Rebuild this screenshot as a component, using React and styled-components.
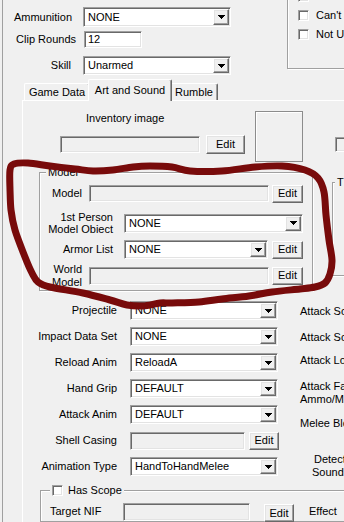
import React from 'react';
import styled, { createGlobalStyle, css } from 'styled-components';

const GlobalStyle = createGlobalStyle`
  html, body { margin: 0; padding: 0; background: #f0f0f0; }
  * { box-sizing: border-box; }
`;

/* ===== win32 bevels ===== */
const sunken = css`
  border: 1px solid;
  border-color: #a0a0a0 #fff #fff #a0a0a0;
  box-shadow: inset 1px 1px 0 #696969, inset -1px -1px 0 #e3e3e3;
`;

const raised = css`
  background: #f0f0f0;
  border: 1px solid;
  border-color: #fff #696969 #696969 #fff;
  box-shadow: inset -1px -1px 0 #a0a0a0, inset 1px 1px 0 #e3e3e3;
`;

const etched = css`
  border: 1px solid #a0a0a0;
  box-shadow: inset 1px 1px 0 #fff, 1px 1px 0 #fff;
`;

const Screen = styled.div`
  position: relative;
  width: 344px;
  height: 522px;
  overflow: hidden;
  padding-left: 2px;
  background: #f0f0f0;
  color: #000;
  font-family: "Liberation Sans", Arial, sans-serif;
  font-size: 11px;
  line-height: 13px;
`;

const Dialog = styled.div`
  height: 100%;
  border-left: 1px solid #a0a0a0;
  display: flex;
  flex-direction: column;
`;

/* ===== generic rows ===== */
const Row = styled.div`
  display: flex;
  align-items: center;
  flex-shrink: 0;
  height: ${p => p.$h || 19}px;
  margin-top: ${p => p.$mt || 0}px;
  padding-left: ${p => p.$pl || 0}px;
`;

const Label = styled.span`
  flex-shrink: 0;
  width: ${p => p.$w}px;
  margin-right: ${p => p.$gap || 0}px;
  text-align: ${p => (p.$left ? 'left' : 'right')};
  white-space: nowrap;
`;

const TextBox = styled.div`
  ${sunken}
  flex-shrink: 0;
  width: ${p => p.$w}px;
  height: ${p => p.$h || 18}px;
  background: ${p => (p.$disabled ? '#f0f0f0' : '#fff')};
  display: flex;
  align-items: center;
  padding-left: 3px;
  white-space: nowrap;
  overflow: hidden;
`;

const Combo = styled.div`
  ${sunken}
  flex-shrink: 0;
  width: ${p => p.$w}px;
  height: ${p => p.$h || 19}px;
  background: #fff;
  display: flex;
  align-items: center;
  padding: 0 1px 0 4px;
`;

const ComboText = styled.span`
  flex: 1;
  white-space: nowrap;
  overflow: hidden;
`;

const ArrowBtn = styled.span`
  ${raised}
  flex-shrink: 0;
  width: 16px;
  height: calc(100% - 2px);
  display: flex;
  align-items: center;
  justify-content: center;
`;

const EditBtn = styled.button`
  ${raised}
  flex-shrink: 0;
  width: ${p => p.$w || 31}px;
  height: ${p => p.$h || 18}px;
  margin-left: ${p => p.$ml || 0}px;
  margin-top: ${p => p.$mt || 0}px;
  padding: 0;
  font: inherit;
  color: #000;
`;

const CheckBox = styled.span`
  ${sunken}
  flex-shrink: 0;
  display: inline-block;
  width: 11px;
  height: 11px;
  background: #fff;
`;

function Arrow() {
  return (
    <svg width="7" height="4" viewBox="0 0 7 4">
      <path d="M0 0H7V1H6V2H5V3H4V4H3V3H2V2H1V1H0Z" fill="#000" />
    </svg>
  );
}

function Dropdown({ w, h, value }) {
  return (
    <Combo $w={w} $h={h}>
      <ComboText>{value}</ComboText>
      <ArrowBtn><Arrow /></ArrowBtn>
    </Combo>
  );
}

/* ===== top section ===== */
const TopSection = styled.div`
  display: flex;
  align-items: flex-start;
  height: 78px;
  flex-shrink: 0;
`;

const TopFields = styled.div`
  width: 284px;
  flex-shrink: 0;
  padding-top: 7px;
  display: flex;
  flex-direction: column;
`;

const FlagsGroup = styled.div`
  ${etched}
  flex-shrink: 0;
  width: 90px;
  height: 93px;
  margin-top: -24px;
  padding: 14px 0 0 10px;
  display: flex;
  flex-direction: column;
  gap: 8px;
`;

const Flag = styled.div`
  display: flex;
  align-items: center;
  gap: 7px;
  height: 11px;
  white-space: nowrap;
`;

/* ===== tabs ===== */
const TabStrip = styled.div`
  display: flex;
  align-items: flex-end;
  height: 22px;
  padding-left: 21px;
  flex-shrink: 0;
  position: relative;
  z-index: 1;
`;

const Tab = styled.div`
  position: relative;
  z-index: ${p => (p.$active ? 2 : 1)};
  width: ${p => p.$w}px;
  height: ${p => (p.$active ? 22 : 17)}px;
  margin: ${p => (p.$active ? '0 -2px -1px -2px' : '0')};
  padding-top: ${p => (p.$active ? 0 : 1)}px;
  background: #f0f0f0;
  border-top: 1px solid #fff;
  border-left: 1px solid #fff;
  border-right: 1px solid #696969;
  box-shadow: inset -1px 0 0 #a0a0a0;
  border-radius: 2px 2px 0 0;
  display: flex;
  align-items: center;
  justify-content: center;
  white-space: nowrap;
`;

const Panel = styled.div`
  flex: 1;
  margin-left: 19px;
  border-top: 1px solid #fff;
  border-left: 1px solid #fff;
  display: flex;
  flex-direction: column;
`;

/* ===== inventory ===== */
const InvSection = styled.div`
  display: flex;
  align-items: flex-start;
  height: 65px;
  flex-shrink: 0;
`;

const InvLeft = styled.div`
  width: 186px;
  margin-left: 37px;
  flex-shrink: 0;
  display: flex;
  flex-direction: column;
`;

const InvLabel = styled.div`
  margin: 11px 0 0 26px;
  white-space: nowrap;
`;

const ImageFrame = styled.div`
  flex-shrink: 0;
  width: 48px;
  height: 51px;
  margin: 10px 0 0 9px;
  border: 1px solid #8c8c8c;
  box-shadow: inset 1px 1px 0 #fff;
`;

const StubBox = styled(TextBox)`
  margin: 36px 0 0 32px;
`;

/* ===== group boxes ===== */
const GroupRow = styled.div`
  display: flex;
  align-items: flex-start;
  flex-shrink: 0;
  height: 127px;
`;

const Group = styled.fieldset`
  ${etched}
  flex-shrink: 0;
  min-width: 0;
  margin: ${p => p.$mt || 0}px 0 0 ${p => p.$ml || 0}px;
  padding: ${p => p.$pt || 5}px 0 ${p => p.$pb || 0}px 0;
  width: ${p => p.$w}px;
  height: ${p => (p.$h ? `${p.$h}px` : 'auto')};
`;

const Legend = styled.legend`
  margin-left: ${p => p.$ml || 6}px;
  padding: 0 2px;
  line-height: 13px;
  height: 13px;
  background: #f0f0f0;
  white-space: nowrap;
`;

const LegendInner = styled.span`
  display: inline-flex;
  align-items: center;
  gap: 5px;
  height: 13px;
`;

const TwoLine = styled.span`
  flex-shrink: 0;
  width: ${p => p.$w}px;
  margin-right: ${p => p.$gap || 0}px;
  text-align: right;
  line-height: ${p => p.$lh || 13}px;
`;

/* ===== lower form ===== */
const LowerSection = styled.div`
  display: flex;
  align-items: flex-start;
  height: 183px;
  margin-top: 8px;
  flex-shrink: 0;
`;

const LowerLeft = styled.div`
  width: 256px;
  flex-shrink: 0;
  display: flex;
  flex-direction: column;
  gap: 7px;
`;

const LowerRight = styled.div`
  margin-left: 21px;
  display: flex;
  flex-direction: column;
  white-space: nowrap;
`;

const SideLabel = styled.div`
  margin-top: ${p => p.$mt || 0}px;
  padding-left: ${p => p.$indent || 0}px;
  line-height: 13px;
`;

/* ===== hand-drawn marker ===== */
const Marker = styled.svg`
  position: absolute;
  left: 0;
  top: 0;
  pointer-events: none;
`;

const loop = [
  [10, 190], [10, 170], [14, 164], [28, 163], [50, 166], [75, 169], [93, 171],
  [113, 170], [133, 167], [150, 166], [172, 167], [190, 171], [222, 171],
  [255, 167], [282, 166], [305, 170], [318, 178], [324, 192], [326, 215],
  [329, 240], [332, 260], [330, 274], [325, 283], [315, 287], [300, 289],
  [272, 292], [249, 296], [222, 299], [199, 302], [172, 303], [160, 303],
  [143, 306], [127, 305], [110, 300], [83, 293], [50, 287], [38, 282],
  [32, 273], [25, 257], [15, 230], [11, 210], [10, 190],
];

function smoothPath(pts) {
  let d = `M${pts[0][0]} ${pts[0][1]}`;
  for (let i = 0; i < pts.length - 1; i++) {
    const p0 = pts[i - 1] || pts[i];
    const p1 = pts[i];
    const p2 = pts[i + 1];
    const p3 = pts[i + 2] || p2;
    const c1x = p1[0] + (p2[0] - p0[0]) / 6;
    const c1y = p1[1] + (p2[1] - p0[1]) / 6;
    const c2x = p2[0] - (p3[0] - p1[0]) / 6;
    const c2y = p2[1] - (p3[1] - p1[1]) / 6;
    d += ` C${c1x.toFixed(1)} ${c1y.toFixed(1)} ${c2x.toFixed(1)} ${c2y.toFixed(1)} ${p2[0]} ${p2[1]}`;
  }
  return d;
}

const lowerRows = [
  ['Projectile', 'NONE'],
  ['Impact Data Set', 'NONE'],
  ['Reload Anim', 'ReloadA'],
  ['Hand Grip', 'DEFAULT'],
  ['Attack Anim', 'DEFAULT'],
];

export default function App() {
  return (
    <Screen>
      <GlobalStyle />
      <Dialog>
        <TopSection>
          <TopFields>
            <Row $h={20}>
              <Label $w={69} $gap={11}>Ammunition</Label>
              <Dropdown w={148} h={20} value="NONE" />
            </Row>
            <Row $h={17} $mt={4}>
              <Label $w={73} $gap={8}>Clip Rounds</Label>
              <TextBox $w={58} $h={17}>12</TextBox>
            </Row>
            <Row $h={19} $mt={8}>
              <Label $w={68} $gap={12}>Skill</Label>
              <Dropdown w={148} value="Unarmed" />
            </Row>
          </TopFields>
          <FlagsGroup>
            <Flag><CheckBox />Non-Playable</Flag>
            <Flag><CheckBox />Can't Drop</Flag>
            <Flag><CheckBox />Not Used in Normal Combat</Flag>
          </FlagsGroup>
        </TopSection>

        <TabStrip>
          <Tab $w={66}>Game Data</Tab>
          <Tab $w={84} $active>Art and Sound</Tab>
          <Tab $w={48}>Rumble</Tab>
        </TabStrip>

        <Panel>
          <InvSection>
            <InvLeft>
              <InvLabel>Inventory image</InvLabel>
              <Row $h={19} $mt={10}>
                <TextBox $w={140} $h={17} $disabled />
                <EditBtn $w={39} $h={19} $ml={6}>Edit</EditBtn>
              </Row>
            </InvLeft>
            <ImageFrame />
            <StubBox $w={40} $h={15} $disabled />
          </InvSection>

          <GroupRow>
            <Group $ml={16} $w={274} $pt={5} $pb={1}>
              <Legend>Model</Legend>
              <Row $h={19}>
                <Label $w={42} $gap={7}>Model</Label>
                <TextBox $w={180} $h={17} $disabled />
                <EditBtn $ml={3}>Edit</EditBtn>
              </Row>
              <Row $h={24} $mt={8}>
                <TwoLine $w={73} $gap={11} $lh={12}>1st Person<br />Model Obiect</TwoLine>
                <Dropdown w={179} value="NONE" />
              </Row>
              <Row $h={19} $mt={5}>
                <Label $w={73} $gap={11}>Armor List</Label>
                <Dropdown w={144} value="NONE" />
                <EditBtn $ml={4}>Edit</EditBtn>
              </Row>
              <Row $h={27} $mt={3}>
                <TwoLine $w={42} $gap={7}>World<br />Model</TwoLine>
                <TextBox $w={180} $h={18} $disabled />
                <EditBtn $ml={3}>Edit</EditBtn>
              </Row>
            </Group>
            <Group $ml={19} $mt={10} $w={60} $h={100}>
              <Legend $ml={2}>T</Legend>
            </Group>
          </GroupRow>

          <LowerSection>
            <LowerLeft>
              {lowerRows.map(([label, value]) => (
                <Row key={label} $h={19}>
                  <Label $w={94} $gap={13}>{label}</Label>
                  <Dropdown w={148} value={value} />
                </Row>
              ))}
              <Row $h={19}>
                <Label $w={94} $gap={13}>Shell Casing</Label>
                <TextBox $w={115} $h={18} $disabled />
                <EditBtn $w={30} $ml={4}>Edit</EditBtn>
              </Row>
              <Row $h={19}>
                <Label $w={94} $gap={13}>Animation Type</Label>
                <Dropdown w={148} value="HandToHandMelee" />
              </Row>
            </LowerLeft>
            <LowerRight>
              <SideLabel $mt={4}>Attack Sound</SideLabel>
              <SideLabel $mt={13}>Attack Sound (2D)</SideLabel>
              <SideLabel $mt={10}>Attack Loop</SideLabel>
              <SideLabel $mt={13}>Attack Fail Sound</SideLabel>
              <SideLabel>Ammo/Magic</SideLabel>
              <SideLabel $mt={11}>Melee Block</SideLabel>
              <SideLabel $mt={23} $indent={14}>Detection</SideLabel>
              <SideLabel $indent={12}>Sound Level</SideLabel>
            </LowerRight>
          </LowerSection>

          <Group $ml={17} $w={330} $pt={5}>
            <Legend $ml={9}>
              <LegendInner><CheckBox />Has Scope</LegendInner>
            </Legend>
            <Row $h={19}>
              <Label $w={73} $left style={{ marginLeft: 9 }}>Target NIF</Label>
              <TextBox $w={127} $h={18} $disabled />
              <EditBtn $w={30} $ml={14} $mt={3}>Edit</EditBtn>
              <Label $w={40} $left style={{ marginLeft: 15 }}>Effect</Label>
            </Row>
          </Group>
        </Panel>
      </Dialog>

      <Marker width="344" height="522" viewBox="0 0 344 522">
        <path
          d={smoothPath(loop)}
          fill="none"
          stroke="#780b0b"
          strokeWidth="7"
          strokeLinecap="round"
          strokeLinejoin="round"
        />
      </Marker>
    </Screen>
  );
}
